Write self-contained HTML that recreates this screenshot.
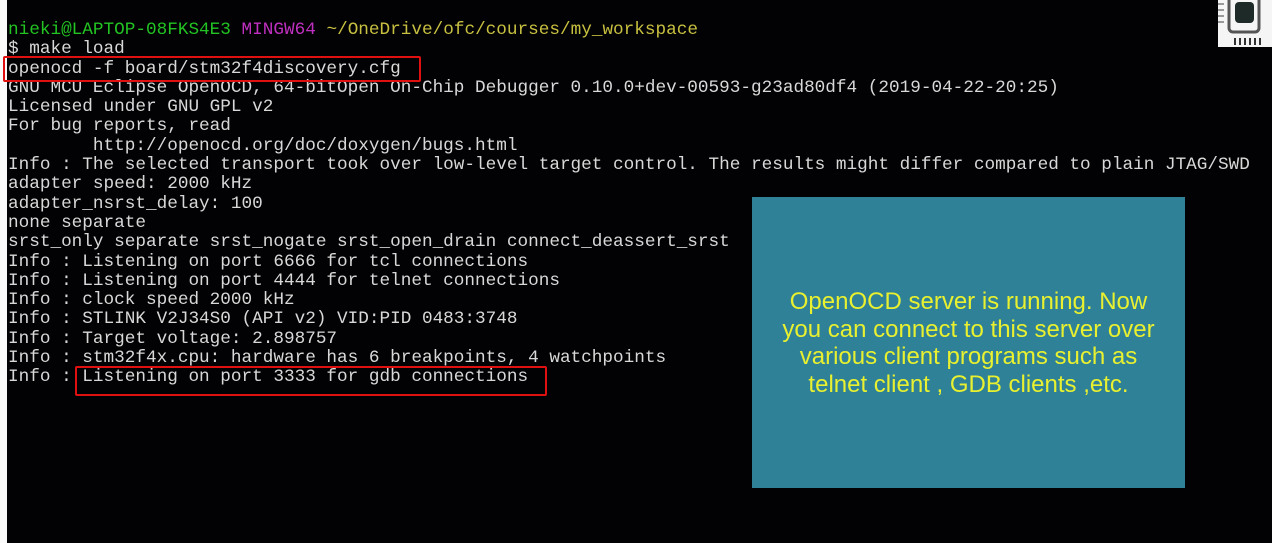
<!DOCTYPE html>
<html><head><meta charset="utf-8"><style>
html,body{margin:0;padding:0;width:1272px;height:543px;overflow:hidden;background:#fafafa}
#term{position:absolute;left:7px;top:0;width:1265px;height:543px;background:#020204}
pre{position:absolute;left:1px;top:21px;margin:0;font-family:"Liberation Mono",monospace;font-size:17.7px;line-height:19.3px;color:#d8d8d8;white-space:pre}
.g{color:#22c322}.m{color:#c030c0}.y{color:#c8c040}
.rb{position:absolute;border:2px solid #e01010;border-radius:2px}
#box{position:absolute;left:752px;top:197px;width:433px;height:291px;background:#2e8196;color:#e8f030;font-family:"Liberation Sans",sans-serif;font-size:24px;line-height:27.5px;text-align:center;box-sizing:border-box;padding-top:91px}
#ic{position:absolute;left:1218px;top:0;width:54px;height:47px;background:#f5f5f5}
</style></head><body>
<div id="term"><pre><span class="g">nieki@LAPTOP-08FKS4E3</span> <span class="m">MINGW64</span> <span class="y">~/OneDrive/ofc/courses/my_workspace</span>
$ make load
openocd -f board/stm32f4discovery.cfg
GNU MCU Eclipse OpenOCD, 64-bitOpen On-Chip Debugger 0.10.0+dev-00593-g23ad80df4 (2019-04-22-20:25)
Licensed under GNU GPL v2
For bug reports, read
        http://openocd.org/doc/doxygen/bugs.html
Info : The selected transport took over low-level target control. The results might differ compared to plain JTAG/SWD
adapter speed: 2000 kHz
adapter_nsrst_delay: 100
none separate
srst_only separate srst_nogate srst_open_drain connect_deassert_srst
Info : Listening on port 6666 for tcl connections
Info : Listening on port 4444 for telnet connections
Info : clock speed 2000 kHz
Info : STLINK V2J34S0 (API v2) VID:PID 0483:3748
Info : Target voltage: 2.898757
Info : stm32f4x.cpu: hardware has 6 breakpoints, 4 watchpoints
Info : Listening on port 3333 for gdb connections</pre></div>
<div class="rb" style="left:3px;top:56px;width:414px;height:22px"></div>
<div class="rb" style="left:75px;top:366px;width:468px;height:26px"></div>
<div id="box">OpenOCD server is running. Now<br>you can connect to this server over<br>various client programs such as<br>telnet client , GDB clients ,etc.</div>
<div id="ic"><svg width="54" height="47" viewBox="0 0 54 47">
<g fill="#999"><rect x="0" y="3" width="6" height="2"/><rect x="0" y="9" width="6" height="2"/><rect x="0" y="15" width="6" height="2"/><rect x="0" y="21" width="6" height="2"/></g>
<rect x="11" y="-4" width="30" height="36" rx="4" fill="none" stroke="#555" stroke-width="3"/>
<rect x="17" y="2" width="19" height="21" rx="4" fill="#1e2a28"/>
<g fill="#333"><rect x="16" y="38" width="2" height="7"/><rect x="21" y="38" width="2" height="7"/><rect x="26" y="38" width="2" height="7"/><rect x="31" y="38" width="2" height="7"/><rect x="36" y="38" width="2" height="7"/><rect x="41" y="38" width="2" height="7"/></g>
</svg></div>
</body></html>
